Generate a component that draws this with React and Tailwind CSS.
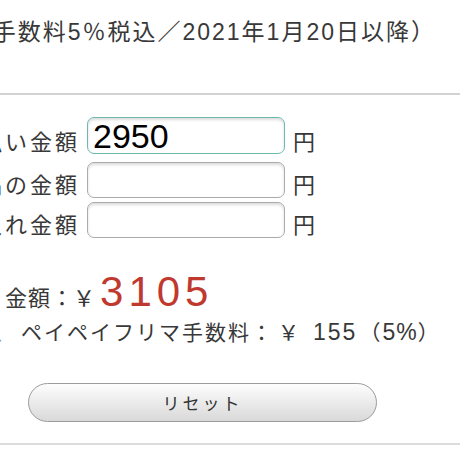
import React from "react";

const FONT = { fontFamily: '"Liberation Sans", "Noto Sans CJK JP", sans-serif' };
const CJK = { fontFamily: '"Noto Sans CJK JP", sans-serif' };

function Row({ label, value, focused, mt, lmt, h }) {
  return (
    <div className={`flex items-start ${mt}`}>
      <div className={`flex w-[80px] shrink-0 justify-end whitespace-nowrap text-[22px] leading-[22px] tracking-[3px] text-[#383838] ${lmt}`} style={CJK}>
        {label}
      </div>
      <div
        className={`ml-[7px] flex w-[198px] shrink-0 items-center rounded-[7px] border-[1.5px] bg-white pl-[5px] text-[34px] leading-none text-black shadow-[inset_0_2px_3px_rgba(0,0,0,0.14)] ${h} ${
          focused ? "border-[#6db9ad]" : "border-[#ababab]"
        }`}
        style={FONT}
      >
        {value}
      </div>
      <div className={`ml-[8px] text-[22px] leading-[22px] text-[#383838] ${lmt}`} style={CJK}>
        円
      </div>
    </div>
  );
}

export default function App() {
  return (
    <div className="relative h-[460px] w-[460px] overflow-hidden bg-white text-[#383838]" style={FONT}>
      <div className="flex w-[436px] justify-end whitespace-nowrap pt-[16px] text-[23px] leading-[33px] tracking-[2px]">
        （ペイペイフリマ手数料5％税込／2021年1月20日以降）
      </div>
      <div className="mt-[44px] h-[2px] w-full bg-[#d2d2d2]" />

      <Row label="支払い金額" value="2950" focused mt="mt-[22px]" lmt="mt-[12px]" h="h-[37px]" />
      <Row label="商品の金額" value="" mt="mt-[8px]" lmt="mt-[10px]" h="h-[36px]" />
      <Row label="仕入れ金額" value="" mt="mt-[4px]" lmt="mt-[10px]" h="h-[36px]" />

      <div className="mt-[33px] flex items-baseline whitespace-nowrap pl-[5px] leading-[42px]">
        <span className="text-[22px] tracking-[1px]">金額</span>
        <span className="text-[22px]">：￥</span>
        <span className="ml-[5px] text-[42px] tracking-[5px] text-[#c0392f]">3105</span>
      </div>
      <div className="mt-[2px] flex items-baseline whitespace-nowrap text-[21px] leading-[21px] tracking-[2px]">
        <div className="flex w-[17px] shrink-0 justify-end text-[#888]">、</div>
        <span className="ml-[4px]">ペイペイフリマ手数料：</span>
        <span className="ml-[4px]">￥</span>
        <span className="ml-[12px] text-[23px]">155</span>
        <span className="ml-[2px]">（<span className="text-[23px] tracking-[1px]">5%</span>）</span>
      </div>

      <div className="mt-[40px] pl-[28px]">
        <button
          className="flex h-[39px] w-[349px] items-center justify-center rounded-full border-[1.5px] border-[#9c9c9c] bg-gradient-to-b from-[#fdfdfd] to-[#d9d9d9] text-[17px] tracking-[3px] text-[#333]"
          style={CJK}
        >
          リセット
        </button>
      </div>
      <div className="mt-[21px] h-[2px] w-full bg-[#dcdcdc]" />
    </div>
  );
}
